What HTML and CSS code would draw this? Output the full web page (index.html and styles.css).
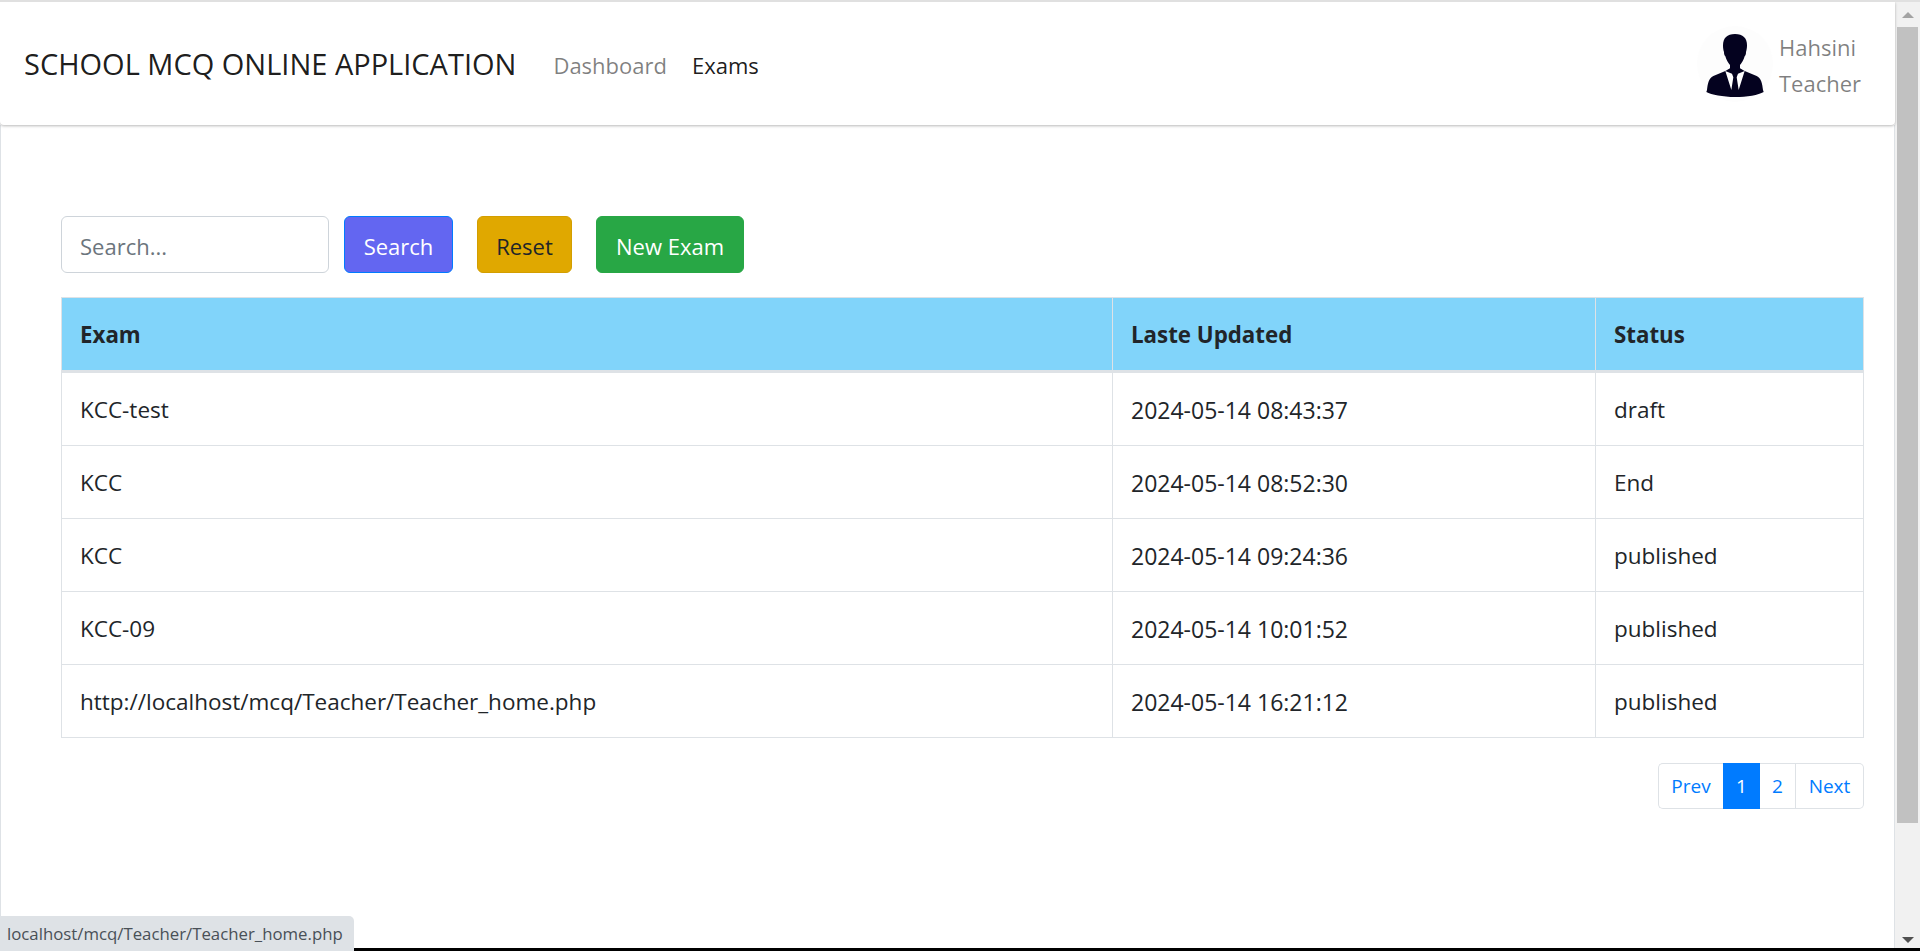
FILE: index.html
```html
<!DOCTYPE html>
<html>
  <head>
    <title>Exams</title>
    <meta charset="utf-8">
    <link rel="stylesheet" href="styles.css">
  </head>
  <body>
    <div class="shell">
      <div class="page">
        <nav class="navbar">
          <a class="brand" href="#">SCHOOL MCQ ONLINE APPLICATION</a>
          <ul class="nav-links">
            <li><a class="nav-link" href="#">Dashboard</a></li>
            <li><a class="nav-link current" href="#">Exams</a></li>
          </ul>
          <div class="user">
            <svg class="avatar" viewBox="111 72 228 228" width="76" height="76">
              <circle cx="225" cy="186" r="114" fill="#fdfdfd"/>
              <path fill="#04021f" d="M225 96c-24 0-36 12-36 34 0 8 1 14 3 20 0 6 1 10 4 13 3 12 10 22 14 26v10l-14 8-36 15c-14 7-17 24-19 42l-2 6c15 8 50 15 86 15s71-6 86-15l-2-6c-2-18-5-35-19-42l-36-15-14-8v-10c4-4 11-14 14-26 3-3 4-7 4-13 2-6 3-12 3-20 0-22-12-34-36-34z"/>
              <path fill="#fff" d="M196 207l20 8 4 11-6 38zM254 207l-20 8-4 11 6 38z"/>
            </svg>
            <div class="user-info">
              <div>Hahsini</div>
              <div>Teacher</div>
            </div>
          </div>
        </nav>
        <div class="content">
          <form class="toolbar">
            <input class="search-input" type="text" placeholder="Search...">
            <button class="btn btn-search" type="button">Search</button>
            <button class="btn btn-reset" type="button">Reset</button>
            <button class="btn btn-new" type="button">New Exam</button>
          </form>
          <table class="exams">
            <thead>
              <tr>
                <th class="col-exam">Exam</th>
                <th class="col-updated">Laste Updated</th>
                <th>Status</th>
              </tr>
            </thead>
            <tbody>
              <tr><td>KCC-test</td><td class="date">2024-05-14 08:43:37</td><td>draft</td></tr>
              <tr><td>KCC</td><td class="date">2024-05-14 08:52:30</td><td>End</td></tr>
              <tr><td>KCC</td><td class="date">2024-05-14 09:24:36</td><td>published</td></tr>
              <tr><td>KCC-09</td><td class="date">2024-05-14 10:01:52</td><td>published</td></tr>
              <tr><td>http://localhost/mcq/Teacher/Teacher_home.php</td><td class="date">2024-05-14 16:21:12</td><td>published</td></tr>
            </tbody>
          </table>
          <ul class="pagination">
            <li><a class="page-link page-prev" href="#">Prev</a></li>
            <li><a class="page-link page-active" href="#">1</a></li>
            <li><a class="page-link page-two" href="#">2</a></li>
            <li><a class="page-link page-next" href="#">Next</a></li>
          </ul>
        </div>
      </div>
      <div class="scrollbar">
        <span class="arrow-up"></span>
        <div class="thumb-area"><div class="thumb"></div></div>
        <span class="arrow-down"></span>
      </div>
    </div>
    <div class="status-url">localhost/mcq/Teacher/Teacher_home.php</div>
  </body>
</html>
```

FILE: styles.css
```css
* {
  box-sizing: border-box;
}

html, body {
  height: 100%;
}

body {
  margin: 0;
  height: 951px;
  overflow: hidden;
  background: #fff;
  border-top: 2px solid #e0e0e0;
  border-bottom: 3px solid #000;
  color: #212529;
  font-family: "Open Sans", "Liberation Sans", sans-serif;
  font-size: 22px;
}

a {
  text-decoration: none;
}

.shell {
  display: flex;
  height: 946px;
}

.page {
  flex: 1;
  min-width: 0;
  display: flex;
  flex-direction: column;
}

/* top bar */
.navbar {
  display: flex;
  align-items: center;
  height: 123px;
  flex: none;
  padding: 0 35px 0 24px;
  background: #fff;
  border-radius: 0 0 4px 4px;
  box-shadow: 0 1px 3px rgba(0, 0, 0, .28);
  position: relative;
}

.brand {
  color: rgba(0, 0, 0, .9);
  font-size: 29px;
  margin-right: 37px;
}

.nav-links {
  display: flex;
  gap: 25px;
  list-style: none;
  margin: 3px 0 0;
  padding: 0;
}

.nav-link {
  color: rgba(0, 0, 0, .5);
}

.nav-link.current {
  color: rgba(0, 0, 0, .9);
}

.user {
  display: flex;
  align-items: center;
  gap: 6px;
  margin-left: auto;
}

.avatar {
  display: block;
}

.user-info {
  width: 81px;
  color: rgba(0, 0, 0, .5);
  line-height: 36px;
  padding-top: 2px;
}

/* main area */
.content {
  flex: 1;
  border-left: 1px solid #dee2e6;
  border-right: 1px solid #dee2e6;
  padding: 91px 30px 0 60px;
}

.toolbar {
  display: flex;
  height: 57px;
  margin: 0 0 24px;
}

.search-input {
  width: 268px;
  margin-right: 15px;
  padding: 2px 18px 0;
  border: 1px solid #ced4da;
  border-radius: 6px;
  color: #495057;
  font: inherit;
}

.search-input::placeholder {
  color: #6c757d;
  opacity: 1;
}

.btn {
  padding: 2px 0 0;
  border: 1px solid transparent;
  border-radius: 6px;
  font: inherit;
}

.btn-search {
  width: 109px;
  margin-right: 24px;
  background: #6366f1;
  border-color: #007bff;
  color: #fff;
}

.btn-reset {
  width: 95px;
  margin-right: 24px;
  background: #e0a800;
  border-color: #d39e00;
  color: #212529;
}

.btn-new {
  width: 148px;
  background: #28a745;
  border-color: #28a745;
  color: #fff;
}

.exams {
  width: 1803px;
  border-collapse: collapse;
  table-layout: fixed;
}

.exams th, .exams td {
  padding: 20px 18px 18px;
  border: 1px solid #dee2e6;
  font-size: 22.5px;
  line-height: 34px;
  text-align: left;
  font-weight: normal;
}

.exams th {
  background: #81d4fa;
  border-bottom-width: 3px;
  font-size: 22.3px;
  font-weight: 700;
}

.exams .date {
  font-size: 23px;
}

.col-exam {
  width: 1051px;
}

.col-updated {
  width: 483px;
}

.pagination {
  display: flex;
  justify-content: flex-end;
  list-style: none;
  margin: 25px 0 0;
  padding: 0;
}

.page-link {
  display: block;
  height: 46px;
  line-height: 44px;
  text-align: center;
  border: 1px solid #dee2e6;
  color: #007bff;
  font-size: 19px;
}

.page-prev {
  width: 65px;
  border-right: 0;
  border-radius: 5px 0 0 5px;
}

.page-active {
  width: 37px;
  background: #007bff;
  border-color: #007bff;
  color: #fff;
}

.page-two {
  width: 36px;
  border-left: 0;
}

.page-next {
  width: 68px;
  border-left: 0;
  border-radius: 0 5px 5px 0;
}

/* scrollbar drawn by hand */
.scrollbar {
  flex: none;
  width: 25px;
  display: flex;
  flex-direction: column;
  align-items: center;
  background: #f1f1f1;
}

.thumb-area {
  flex: 1;
  width: 100%;
  padding-left: 2px;
  padding-right: 2px;
}

.thumb {
  width: 21px;
  height: 796px;
  background: #c1c1c1;
}

.arrow-up {
  flex: none;
  width: 0;
  height: 0;
  margin: 10px 0 9px;
  border: 6px solid transparent;
  border-top: 0;
  border-bottom-color: #a3a3a3;
}

.arrow-down {
  flex: none;
  width: 0;
  height: 0;
  margin: 0 0 5px;
  border: 6px solid transparent;
  border-bottom: 0;
  border-top-color: #505050;
}

/* link hover status, sits over the page */
.status-url {
  position: absolute;
  left: 0;
  bottom: 0;
  width: 354px;
  height: 35px;
  padding-left: 7px;
  background: #dee2e6;
  border-top-right-radius: 5px;
  color: #495057;
  font-size: 16.8px;
  line-height: 35px;
}
```
